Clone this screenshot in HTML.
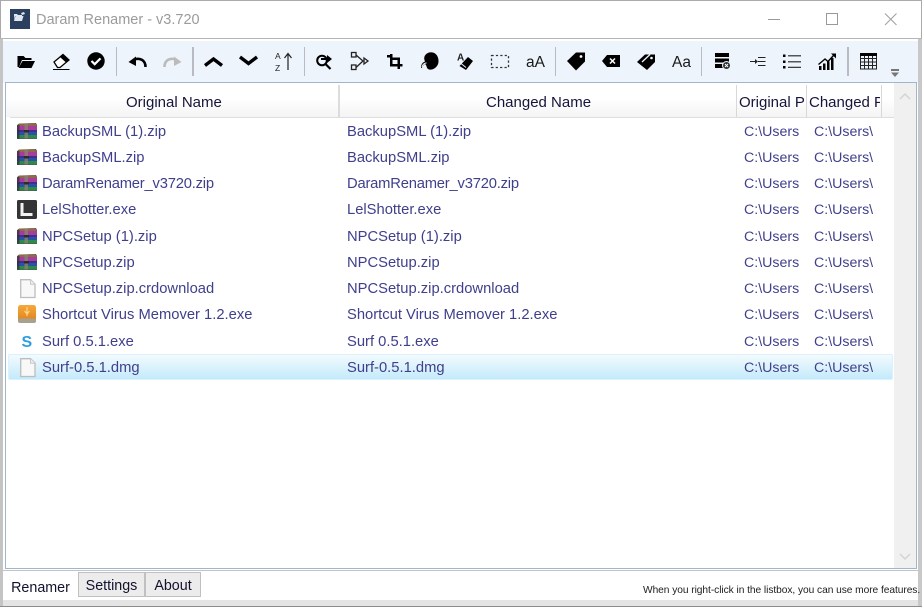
<!DOCTYPE html>
<html lang="en"><head><meta charset="utf-8"><title>Daram Renamer</title>
<style>
html,body{margin:0;padding:0;width:922px;height:607px;overflow:hidden;background:#fff}
body{position:relative;font-family:"Liberation Sans",sans-serif}
.a{position:absolute}
svg{position:absolute;left:0;top:0;overflow:visible}
.t{position:absolute;white-space:nowrap;overflow:hidden;font-size:14.75px;line-height:20px;height:20px;color:#3f3f8c}
.p{font-size:14.2px}
.d{letter-spacing:-.2px}
.h{position:absolute;top:93px;font-size:15px;line-height:20px;color:#15153a;white-space:nowrap;overflow:hidden}
.tab{position:absolute;font-size:14.3px;line-height:20px;color:#12122e;text-align:center;box-sizing:border-box}
</style></head>
<body>
<!-- window frame -->
<div class="a" style="left:0;top:0;width:922px;height:1px;background:#aaa"></div>
<div class="a" style="left:0;top:0;width:1px;height:39px;background:#aaa"></div>
<div class="a" style="left:921px;top:0;width:1px;height:39px;background:#aaa"></div>
<div class="a" style="left:0;top:38px;width:922px;height:1px;background:#b5b5b5"></div>
<div class="a" style="left:0;top:39px;width:3px;height:568px;background:#c4c4c4"></div>
<div class="a" style="left:918px;top:39px;width:4px;height:568px;background:#c8c8c8"></div>
<!-- title bar -->
<div class="a" style="left:10px;top:9px;width:20px;height:20px;background:#2b3f5e"></div>
<div class="a" style="left:36px;top:10px;font-size:14.5px;line-height:20px;color:#9b9b9b;white-space:nowrap">Daram Renamer - v3.720</div>
<!-- toolbar -->
<div class="a" style="left:3px;top:41px;width:915px;height:42px;background:#eef4fc"></div>
<!-- list -->
<div class="a" style="left:5px;top:82px;width:912px;height:487px;box-sizing:border-box;border:1px solid #9fb6cd;background:#fff"></div>
<div class="a" style="left:6px;top:83px;width:888px;height:34px;background:linear-gradient(#fff 45%,#f4f4f4)"></div>
<div class="a" style="left:10px;top:117px;width:884px;height:1px;background:#dedede"></div>
<div class="a" style="left:338px;top:85px;width:2px;height:32px;background:#dcdcdc"></div>
<div class="a" style="left:736px;top:85px;width:1px;height:32px;background:#d8d8d8"></div>
<div class="a" style="left:806px;top:85px;width:1px;height:32px;background:#d8d8d8"></div>
<div class="a" style="left:881px;top:85px;width:1px;height:32px;background:#d8d8d8"></div>
<div class="a" style="left:894px;top:83px;width:22px;height:485px;background:#f0f0f0"></div>
<div class="h" style="left:126px">Original Name</div>
<div class="h" style="left:486px">Changed Name</div>
<div class="h" style="left:739px;width:66px">Original Path</div>
<div class="h" style="left:809px;width:71px">Changed Path</div>
<!-- selected row -->
<div class="a" style="left:8px;top:354px;width:885px;height:26px;box-sizing:border-box;border:1px solid #d9f2fd;border-radius:2px;background:linear-gradient(#f3fbfe,#c4eafb)"></div>
<!-- rows -->
<div class="t" style="left:42px;top:122px">BackupSML (1).zip</div><div class="t" style="left:347px;top:122px">BackupSML (1).zip</div><div class="t p" style="left:744px;top:122px;width:55px">C:\Users\</div><div class="t p" style="left:814px;top:122px;width:60px">C:\Users\</div>
<div class="t" style="left:42px;top:148px">BackupSML.zip</div><div class="t" style="left:347px;top:148px">BackupSML.zip</div><div class="t p" style="left:744px;top:148px;width:55px">C:\Users\</div><div class="t p" style="left:814px;top:148px;width:60px">C:\Users\</div>
<div class="t d" style="left:42px;top:174px">DaramRenamer_v3720.zip</div><div class="t d" style="left:347px;top:174px">DaramRenamer_v3720.zip</div><div class="t p" style="left:744px;top:174px;width:55px">C:\Users\</div><div class="t p" style="left:814px;top:174px;width:60px">C:\Users\</div>
<div class="t" style="left:42px;top:200px">LelShotter.exe</div><div class="t" style="left:347px;top:200px">LelShotter.exe</div><div class="t p" style="left:744px;top:200px;width:55px">C:\Users\</div><div class="t p" style="left:814px;top:200px;width:60px">C:\Users\</div>
<div class="t" style="left:42px;top:227px">NPCSetup (1).zip</div><div class="t" style="left:347px;top:227px">NPCSetup (1).zip</div><div class="t p" style="left:744px;top:227px;width:55px">C:\Users\</div><div class="t p" style="left:814px;top:227px;width:60px">C:\Users\</div>
<div class="t" style="left:42px;top:253px">NPCSetup.zip</div><div class="t" style="left:347px;top:253px">NPCSetup.zip</div><div class="t p" style="left:744px;top:253px;width:55px">C:\Users\</div><div class="t p" style="left:814px;top:253px;width:60px">C:\Users\</div>
<div class="t" style="left:42px;top:279px">NPCSetup.zip.crdownload</div><div class="t" style="left:347px;top:279px">NPCSetup.zip.crdownload</div><div class="t p" style="left:744px;top:279px;width:55px">C:\Users\</div><div class="t p" style="left:814px;top:279px;width:60px">C:\Users\</div>
<div class="t" style="left:42px;top:305px">Shortcut Virus Memover 1.2.exe</div><div class="t" style="left:347px;top:305px">Shortcut Virus Memover 1.2.exe</div><div class="t p" style="left:744px;top:305px;width:55px">C:\Users\</div><div class="t p" style="left:814px;top:305px;width:60px">C:\Users\</div>
<div class="t" style="left:42px;top:332px">Surf 0.5.1.exe</div><div class="t" style="left:347px;top:332px">Surf 0.5.1.exe</div><div class="t p" style="left:744px;top:332px;width:55px">C:\Users\</div><div class="t p" style="left:814px;top:332px;width:60px">C:\Users\</div>
<div class="t" style="left:42px;top:358px">Surf-0.5.1.dmg</div><div class="t" style="left:347px;top:358px">Surf-0.5.1.dmg</div><div class="t p" style="left:744px;top:358px;width:55px">C:\Users\</div><div class="t p" style="left:814px;top:358px;width:60px">C:\Users\</div>
<!-- bottom -->
<div class="a" style="left:3px;top:600px;width:915px;height:7px;background:#e4e4e4"></div>
<div class="a" style="left:0;top:606px;width:922px;height:1px;background:#8c8c8c"></div>
<div class="a" style="left:3px;top:570px;width:915px;height:1px;background:#c4c4c4"></div>
<div class="tab" style="left:3px;top:571px;width:75px;height:29px;background:#fff;padding-top:7px">Renamer</div>
<div class="tab" style="left:78px;top:572px;width:67px;height:25px;background:#ececec;border:1px solid #c0c0c0;padding-top:3px">Settings</div>
<div class="tab" style="left:145px;top:572px;width:56px;height:25px;background:#ececec;border:1px solid #c0c0c0;padding-top:3px">About</div>
<div class="a" style="left:643px;top:584px;font-size:10.2px;letter-spacing:-.05px;line-height:14px;color:#1c1c1c;white-space:nowrap">When you right-click in the listbox, you can use more features.</div>
<svg width="922" height="607" viewBox="0 0 922 607" xmlns="http://www.w3.org/2000/svg">
<defs>
<linearGradient id="us" x1="0" y1="0" x2="0" y2="1"><stop offset="0" stop-color="#f5a93c"/><stop offset="1" stop-color="#dd7f1a"/></linearGradient>
<g id="rar">
<path d="M1 1L19 0 20 2V16H0V3z" fill="#50505c"/>
<path d="M0 3L2 .5 18 0 20 3z" fill="#8c6a4c"/>
<rect x="0" y="3" width="20" height="4" fill="#a83c9c"/>
<rect x="0" y="7" width="20" height="2" fill="#40308c"/>
<rect x="0" y="9" width="20" height="3" fill="#2b50a8"/>
<rect x="0" y="12" width="20" height="3.500" fill="#2f8a48"/>
<rect x="7.500" y="1" width="3.500" height="14.500" fill="#8c8470" opacity=".75"/>
<rect x="7" y="7" width="5" height="2.500" fill="#2c2c2c"/>
<rect x="0" y="2" width="2.500" height="13.500" fill="#2e2e38" opacity=".7"/>
</g>
<g id="file">
<path d="M.7.7H10.500L15 5.200V18.500H.7Z" fill="#f8f8f8" stroke="#bdbdbd" stroke-width="1.300"/>
<path d="M10.500.7V5.200H15" fill="#eee" stroke="#c8c8c8"/>
</g>
</defs>
<!-- title icon -->
<path d="M14 21l1.500-5h8l-1.500 5zM14 20v-6h3l1 1h4v1h-7l-1 4z" fill="#dfe6f0"/>
<path d="M21 13l3-1 1 2-3 1z" fill="#dfe6f0"/>
<!-- window buttons -->
<path d="M768 19.500h12" stroke="#999" stroke-width="1"/>
<rect x="826.500" y="13.500" width="11" height="11" fill="none" stroke="#999"/>
<path d="M885 13.500l11.500 11.500M896.500 13.500L885 25" stroke="#a0a0a0" stroke-width="1"/>
<!-- file icons -->
<use href="#rar" x="17" y="123"/><use href="#rar" x="17" y="149"/><use href="#rar" x="17" y="175"/>
<rect x="17" y="200" width="20" height="19" rx="1.500" fill="#343434"/>
<path d="M20.500 203h3v10h9v3h-12z" fill="#f2f2f2"/>
<use href="#rar" x="17" y="228"/><use href="#rar" x="17" y="254"/>
<use href="#file" x="20" y="279"/>
<rect x="18" y="305" width="18" height="18" rx="2.500" fill="url(#us)"/>
<rect x="18" y="318.500" width="18" height="4.500" rx="2" fill="#a8a090"/>
<path d="M27 307v9M24.500 311l2.500 3 2.500-3" stroke="#ffd68a" stroke-width="1.200" fill="none"/>
<text x="21.500" y="347" font-family="Liberation Sans,sans-serif" font-size="16" font-weight="700" fill="#2f9de0">S</text>
<use href="#file" x="20" y="358"/>
<!-- scrollbar arrows -->
<path d="M900 99l5-5 5 5" fill="none" stroke="#d4d4d4" stroke-width="1.500"/>
<path d="M900 554l5 5 5-5" fill="none" stroke="#d4d4d4" stroke-width="1.500"/>
<!-- separators -->
<g fill="#b8bcc2">
<rect x="116" y="47" width="1" height="29"/><rect x="192" y="47" width="2" height="29"/><rect x="304" y="47" width="1" height="29"/><rect x="555" y="47" width="1" height="29"/><rect x="701" y="47" width="1" height="29"/><rect x="847" y="47" width="2" height="29"/>
</g>
<g fill="#000">
<!-- folder -->
<path d="M17.500 67V56h6l2 2h6v2H22l-3 7z"/><path d="M22.500 61H35L31.500 68H18.500z"/>
<!-- eraser -->
<path d="M54 62L63 54.500 69 60 60 67.500H57.500z" fill="#fff" stroke="#000" stroke-width="1.300"/><path d="M60 57L63 54.500 69 60 66 62.500z"/><path d="M53 69.500H69.500" stroke="#000" stroke-width="1"/>
<!-- check -->
<circle cx="96" cy="61" r="8.700"/><path d="M91.500 61l3.200 3.200 5.800-5.800" fill="none" stroke="#fff" stroke-width="2.200"/>
<!-- undo -->
<path d="M145.500 67C145.500 60 140 57.500 134 59.500" fill="none" stroke="#000" stroke-width="2.600"/><path d="M128.500 62L136 56.500V66z"/>
<!-- redo -->
<path d="M164.500 67C164.500 60 170 57.500 176 59.500" fill="none" stroke="#bbb" stroke-width="2.600"/><path d="M181.500 62L174 56.500V66z" fill="#bbb"/>
<!-- chevrons -->
<path d="M205 65.500L213.500 59 222 65.500" fill="none" stroke="#000" stroke-width="3.400"/>
<path d="M240 57L248.500 63.500 257 57" fill="none" stroke="#000" stroke-width="3.400"/>
<!-- AZ sort -->
<text x="275" y="59" font-family="Liberation Sans,sans-serif" font-size="8.500" fill="#222">A</text>
<text x="275" y="71" font-family="Liberation Sans,sans-serif" font-size="8.500" fill="#222">Z</text>
<path d="M288 70V54M284.500 58L288 53.500 291.500 58" fill="none" stroke="#222" stroke-width="1.200"/>
<!-- search replace -->
<circle cx="322" cy="60.500" r="4.800" fill="none" stroke="#000" stroke-width="2"/>
<path d="M325.500 64L330.500 69" stroke="#000" stroke-width="2.200"/><path d="M321 58h6v-3l5 4-5 4v-3h-6z"/>
<!-- flow -->
<g fill="none" stroke="#222" stroke-width="1.300">
<rect x="351.500" y="52.500" width="4.500" height="4.500"/><rect x="351.500" y="65" width="4.500" height="4.500"/>
<path d="M356 55L363 61 356 67.500"/><path d="M364 58l4 3-4 3z"/>
</g>
<!-- crop -->
<path d="M390 54h2.500v10h10v2.500H400V69h-2.500v-2.500H390V57.500H387V55h3zM392.500 57.500H400V64h-2.500V60H392.500z"/>
<!-- blob -->
<path d="M429 52.500C435 51 439 56 438.500 62 438 67 433 70.500 429 69.500 426 68.500 427 65 425 64 423 65 422.500 68 421 68 421 65 422 62.500 425 61.500 423 57 425 54 429 52.500Z"/><path d="M426.500 63c-2 0-4 1.500-4.500 4" stroke="#eef4fc" fill="none"/>
<!-- highlighter -->
<text x="457" y="60.500" font-family="Liberation Sans,sans-serif" font-size="10" font-weight="700" fill="#222">A</text>
<path d="M468 57L473 61 466 70 459.500 66z"/><path d="M461 63.500L466 67.500" stroke="#eef4fc" stroke-width="1"/>
<!-- marquee -->
<rect x="491.500" y="55.500" width="17" height="12" fill="none" stroke="#333" stroke-width="1.300" stroke-dasharray="2.200 2.200"/>
<!-- tag -->
<path d="M567 61L576 52.500H585V61.500L576 70.500z"/><circle cx="581" cy="56.500" r="1.400" fill="#fff"/>
<!-- delete label -->
<path d="M602 61L607 55H620V67H607z"/><path d="M610 58.500l5 5M615 58.500l-5 5" stroke="#fff" stroke-width="1.500"/>
<!-- tags -->
<path d="M637 62L645 54.500H655V62L647 70z"/><path d="M642 62L650 54.500" stroke="#eef4fc" stroke-width="1.300"/><circle cx="651.500" cy="58" r="1.300" fill="#fff"/>
<!-- stack x -->
<rect x="715" y="53" width="14" height="4"/><rect x="715" y="58.500" width="14" height="4"/><rect x="715" y="64" width="9" height="4"/>
<circle cx="726.500" cy="65.500" r="4" fill="#333" stroke="#eef4fc" stroke-width="1"/><path d="M725 64l3 3M728 64l-3 3" stroke="#fff" stroke-width=".9"/>
<!-- indent -->
<path d="M750 61.500h6M758 57.500h7.500M758 61.500h7.500M758 65.500h7.500" stroke="#222" stroke-width="1.100"/><path d="M755 59l3 2.500-3 2.500z" fill="#222"/>
<!-- list -->
<rect x="783" y="54.500" width="2.500" height="2.500"/><rect x="783" y="60.500" width="2.500" height="2.500"/><rect x="783" y="66" width="2.500" height="2.500"/>
<path d="M788 55.800h13M788 61.800h13M788 67.300h13" stroke="#222" stroke-width="1.200"/>
<!-- chart -->
<rect x="819" y="66" width="2.500" height="4"/><rect x="823" y="63.500" width="2.500" height="6.500"/><rect x="827" y="61.500" width="2.500" height="8.500"/><rect x="831" y="58" width="2.500" height="12"/>
<path d="M818.500 64.500L825 59l3 2.500 5.500-6" fill="none" stroke="#000" stroke-width="1.400"/><path d="M831 53.500h5v5z"/>
<!-- table -->
<g fill="none" stroke="#222" stroke-width="1"><rect x="860.500" y="53.500" width="16" height="15.500"/>
<path d="M860.500 58.500h16M860.500 62h16M860.500 65.500h16M864.500 56v13M868.500 56v13M872.500 56v13"/></g>
<rect x="860" y="53" width="17" height="3"/>
<!-- overflow -->
<rect x="891" y="69" width="8" height="2" fill="#777"/><path d="M891 72.500h8L895 77z" fill="#777"/>
</g>
<text x="526" y="67" font-family="Liberation Sans,sans-serif" font-size="15.500" fill="#1a1a1a">aA</text>
<text x="672" y="67" font-family="Liberation Sans,sans-serif" font-size="15.500" fill="#1a1a1a">Aa</text>
</svg>
</body></html>
